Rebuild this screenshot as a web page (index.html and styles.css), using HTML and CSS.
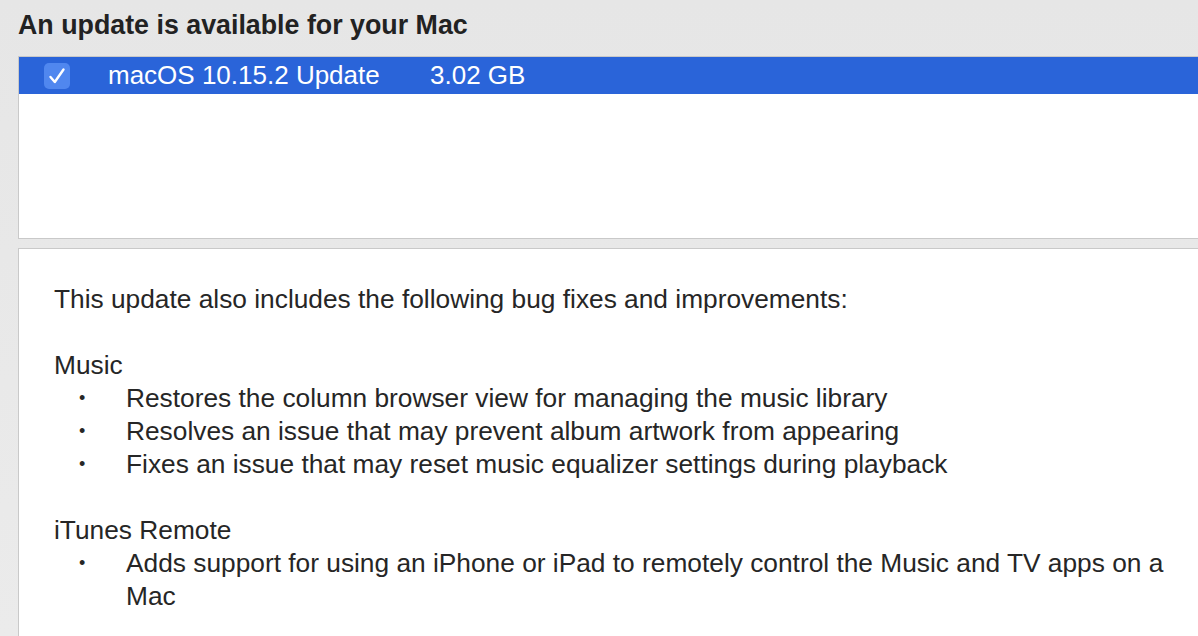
FILE: index.html
```html
<!DOCTYPE html>
<html lang="en">
<head>
    <meta charset="UTF-8">
    <title>Software Update</title>
    <link rel="stylesheet" href="styles.css">
</head>
<body>
    <div class="window">
        <h1 class="title">An update is available for your Mac</h1>

        <div class="update-list">
            <div class="update-row selected">
                <span class="check">
                    <svg width="18" height="18" viewBox="0 0 18 18">
                        <path d="M2.5 10 L6.8 15 L15.5 2.5" fill="none" stroke="#fff" stroke-width="2.4" stroke-linecap="round" stroke-linejoin="round"/>
                    </svg>
                </span>
                <span class="name">macOS 10.15.2 Update</span>
                <span class="size">3.02 GB</span>
            </div>
        </div>

        <div class="notes">
            <p class="intro">This update also includes the following bug fixes and improvements:</p>

            <div class="section">
                <div class="section-title">Music</div>
                <ul class="items">
                    <li>Restores the column browser view for managing the music library</li>
                    <li>Resolves an issue that may prevent album artwork from appearing</li>
                    <li>Fixes an issue that may reset music equalizer settings during playback</li>
                </ul>
            </div>

            <div class="section">
                <div class="section-title">iTunes Remote</div>
                <ul class="items">
                    <li>Adds support for using an iPhone or iPad to remotely control the Music and TV apps on a Mac</li>
                </ul>
            </div>
        </div>
    </div>
</body>
</html>
```

FILE: styles.css
```css
html, body {
    margin: 0;
    padding: 0;
    height: 100%;
    overflow: hidden;
}
body {
    font-family: 'Liberation Sans', Arial, sans-serif;
    background: linear-gradient(to bottom, #e6e6e6, #ebebeb);
    color: #262626;
}
.window {
    padding-left: 18px;
}
.title {
    margin: 0;
    padding-top: 9px;
    height: 56px;
    box-sizing: border-box;
    font-size: 26.8px;
    line-height: 32px;
    font-weight: 700;
    color: #222;
}
.update-list {
    height: 181px;
    background: #fff;
    border-top: 1px solid #c9c9c9;
    border-left: 1px solid #c9c9c9;
    border-bottom: 1px solid #c9c9c9;
}
.update-row {
    display: flex;
    align-items: center;
    height: 37px;
    font-size: 26px;
}
.update-row.selected {
    background-color: #2a64d9;
    color: #fff;
}
.check {
    display: flex;
    align-items: center;
    justify-content: center;
    width: 26px;
    height: 26px;
    margin-left: 25px;
    border-radius: 5px;
    background-color: #5087ef;
}
.name {
    margin-left: 38px;
    width: 322px;
}
.notes {
    margin-top: 9px;
    height: 400px;
    background: #fff;
    border-top: 1px solid #c9c9c9;
    border-left: 1px solid #c9c9c9;
    padding: 34px 0 0 35px;
    font-size: 26.3px;
    line-height: 33px;
}
.intro {
    margin: 0 0 33px 0;
}
.section {
    margin-bottom: 33px;
}
.items {
    list-style: none;
    margin: 0;
    padding: 0 20px 0 72px;
}
.items li {
    position: relative;
}
.items li::before {
    content: "\2022";
    position: absolute;
    left: -47px;
    font-size: 18px;
}
```
